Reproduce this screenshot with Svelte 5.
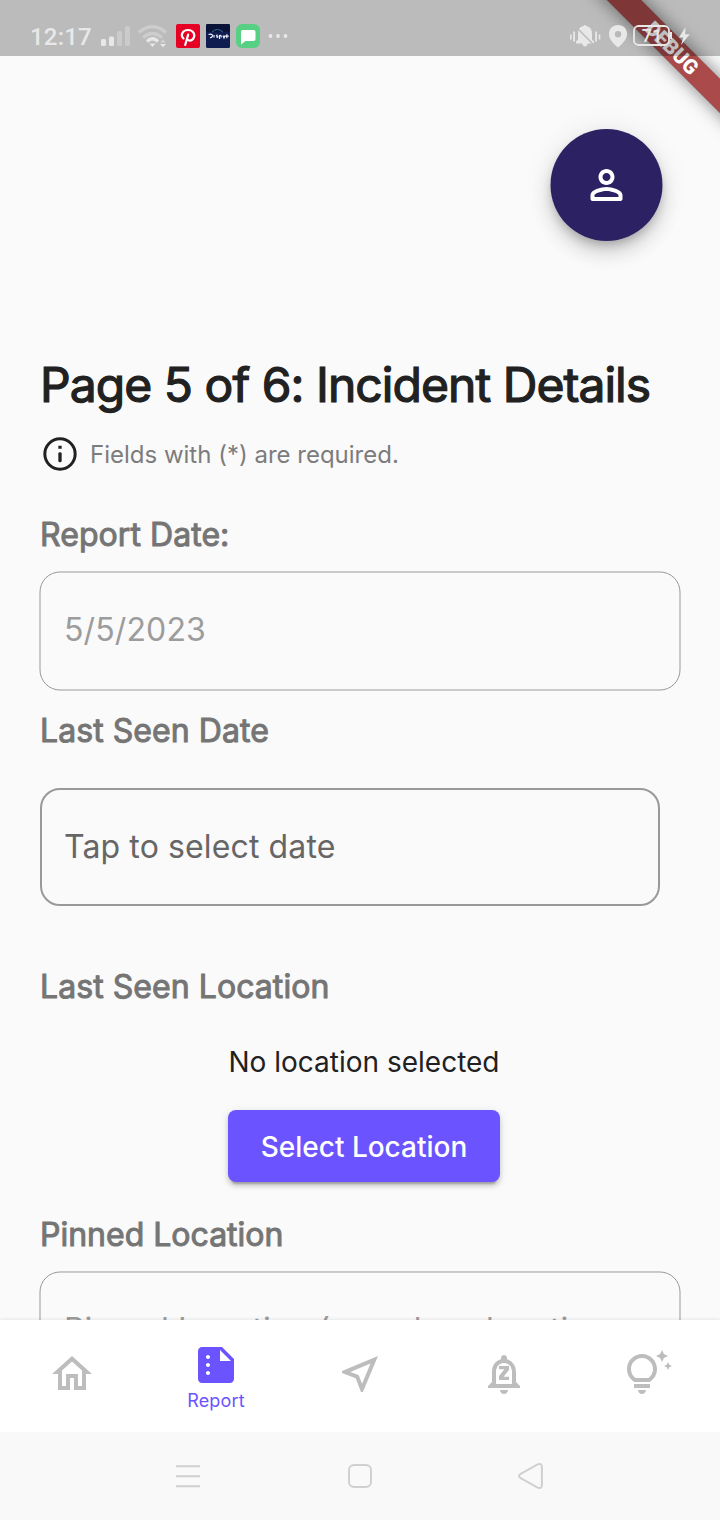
<script>
  const tabs = [
    { name: 'home', d: 'M12 5.69l5 4.5V18h-2v-6H9v6H7v-7.81l5-4.5M12 3L2 12h3v8h6v-6h2v6h6v-8h3L12 3z' },
    { name: 'report', label: 'Report', d: 'M15 3H5C3.9 3 3 3.9 3 5V19c0 1.1.9 2 2 2H19c1.1 0 2-.9 2-2V9L15 3zM8 17c-.55 0-1-.45-1-1s.45-1 1-1 1 .45 1 1-.45 1-1 1zM8 13c-.55 0-1-.45-1-1s.45-1 1-1 1 .45 1 1-.45 1-1 1zM8 9c-.55 0-1-.45-1-1s.45-1 1-1 1 .45 1 1-.45 1-1 1zM14 10V4.5l5.5 5.5H14z' },
    { name: 'nearby', d: 'M17.27 6.73l-4.24 10.13-1.32-3.42-.32-.83-.82-.32-3.43-1.33 10.13-4.23M21 3L3 10.53v.98l6.84 2.65L12.48 21h.98L21 3z' },
    { name: 'alerts', d: 'M18 16v-5c0-3.07-1.63-5.64-4.5-6.32V4c0-.83-.67-1.5-1.5-1.5s-1.5.67-1.5 1.5v.68C7.64 5.36 6 7.92 6 11v5l-2 2v1h16v-1l-2-2zm-2 1H8v-6c0-2.48 1.51-4.5 4-4.5s4 2.02 4 4.5v6zM12 22c1.1 0 2-.9 2-2h-4c0 1.1.9 2 2 2zM9.5 9.6h2.7l-2.7 3.4V15h5v-1.600h-2.700l2.700-3.400V8h-5v1.600z' },
    { name: 'tips', d: 'M7 20h4c0 1.1-.9 2-2 2s-2-.9-2-2zM5 19h8v-2H5v2zM16.5 9.5c0 3.82-2.66 5.86-3.77 6.5H5.27C4.16 15.36 1.5 13.32 1.5 9.5 1.5 5.36 4.86 2 9 2s7.5 3.36 7.5 7.5zM14.5 9.5C14.5 6.47 12.03 4 9 4S3.5 6.47 3.5 9.5c0 2.47 1.49 3.89 2.35 4.5h6.3c.86-.61 2.35-2.03 2.35-4.5zM21.37 7.37L20 8l1.37.63L22 10l.63-1.37L24 8l-1.37-.63L22 6l-.63 1.37zM19 6l.94-2.06L22 3l-2.06-.94L19 0l-.94 2.06L16 3l2.06.94L19 6z' },
  ];
</script>

<div class="phone">
  <main>
    <div class="top">
      <button class="avatar" aria-label="Profile">
        <svg width="48" height="48" viewBox="0 0 24 24"><path fill="#fff" fill-rule="evenodd" d="M12 6c1.1 0 2 .9 2 2s-.9 2-2 2-2-.9-2-2 .9-2 2-2m0 9c2.7 0 5.8 1.29 6 2v1H6v-.99c.2-.72 3.3-2.01 6-2.01M12 4C9.79 4 8 5.79 8 8s1.79 4 4 4 4-1.79 4-4-1.79-4-4-4zM12 13c-2.67 0-8 1.34-8 4v2c0 .55.45 1 1 1h14c.55 0 1-.45 1-1v-2c0-2.66-5.33-4-8-4z"/></svg>
      </button>
    </div>
    <h1>Page 5 of 6: Incident Details</h1>
    <div class="info">
      <svg width="40" height="40" viewBox="0 0 24 24"><circle cx="12" cy="12" r="9.1" fill="none" stroke="#212121" stroke-width="1.8"/><path fill="#212121" d="M11 7h2v1.800h-2zM11 11.600a1 .6 0 0 1 2 0V16a1 1 0 0 1-2 0z"/></svg>
      <span>Fields with (*) are required.</span>
    </div>
    <h2>Report Date:</h2>
    <div class="field thin">
      <svg class="outline" width="642" height="120"><rect x="1" y="1" width="640" height="118" rx="20"/></svg>
      <span>5/5/2023</span>
    </div>
    <h2 class="seen">Last Seen Date</h2>
    <div class="field picker"><span>Tap to select date</span></div>
    <h2 class="place">Last Seen Location</h2>
    <div class="location">
      <p>No location selected</p>
      <button class="select">Select Location</button>
    </div>
    <h2 class="pinned">Pinned Location</h2>
    <div class="field thin">
      <svg class="outline" width="642" height="120"><rect x="1" y="1" width="640" height="118" rx="20"/></svg>
      <span>Pinned Location (any place location...</span>
    </div>
  </main>

  <nav>
    {#each tabs as tab}
      <div class="tab" class:active={tab.label}>
        <svg width="48" height="48" viewBox="0 0 24 24"><path fill-rule="evenodd" d={tab.d}/></svg>
        {#if tab.label}<span>{tab.label}</span>{/if}
      </div>
    {/each}
  </nav>

  <footer>
    <svg width="28" height="28" viewBox="0 0 28 28"><path d="M2 4.3h24M2 14.3h24M2 24.3h24"/></svg>
    <svg width="28" height="28" viewBox="0 0 28 28"><rect x="3" y="3" width="22" height="22" rx="5"/></svg>
    <svg width="28" height="28" viewBox="0 0 28 28"><path d="M2.200 12.200L19.700 2.400Q23.500 1 23.900 4.500V23.500Q23.500 27 19.700 25.600L2.200 15.800Q-.2 14 2.200 12.200Z"/></svg>
  </footer>

  <div class="corner"><div class="ribbon">DEBUG</div></div>

  <header>
    <span class="time">12:17</span>
    <svg width="190" height="32" viewBox="100 20 190 32">
      <g fill="#e8e8e8">
        <rect x="101" y="39" width="5" height="7" rx="1.5"/><rect x="109" y="36.500" width="5" height="9.500" rx="1.5"/>
        <g fill="#cbcbcb"><rect x="117" y="31" width="5" height="15" rx="1.5"/><rect x="125" y="26" width="5" height="20" rx="1.500"/></g>
      </g>
      <g fill="none" stroke-width="3.200">
        <path stroke="#cdcdcd" d="M138.600 32.500Q152.500 21 166 32.500M143 37.500Q152.500 29.500 162 37.500"/>
        <path stroke="#e8e8e8" d="M147 41.500Q152.500 36 158 41.500"/>
      </g>
      <path fill="#e8e8e8" d="M149.500 43.500h6l-3 3.500zM160 44h6l-3 3.200z"/><path fill="#d2d2d2" d="M160 42.500h6l-3-3.200z"/>
      <rect x="176" y="24" width="24" height="24" rx="2" fill="#e60023"/>
      <g fill="none" stroke="#fff" stroke-width="2.200" stroke-linecap="round"><path d="M183.500 38.500C180 35 182.500 30 188 30s8 5 5 9c-2 2.500-5 1.600-6 0M188.200 34.500L185.200 45"/></g>
      <rect x="206" y="24" width="24" height="24" rx="1.500" fill="#0e1c50"/>
      <rect x="206" y="24" width="24" height="8" rx="1.500" fill="#0a1238"/>
      <path d="M212 32q5-5 11 0" fill="none" stroke="#2a6c9c"/>
      <path d="M208.500 34.500q4-1 4 1.300-.5 2-2.500 1.700M214 35v2.500M217.500 34.800q-2 1-.3 1.500 1.500.8-.7 1.200M219.500 39v-3.500q2.500-.5 1.500 2M223 35.500l1 2.500 1-2.500M226.800 34.200v4M224.800 36.200h4" fill="none" stroke="#eef" stroke-width="1.200"/>
      <rect x="236" y="24" width="24" height="24" rx="6" fill="#57d083"/>
      <path fill="#fff" d="M242.500 30h11q2 0 2 2v7q0 2-2 2H245.500L241 44.500V32q0-2 1.500-2z"/>
      <g fill="#e8e8e8"><circle cx="270.500" cy="36" r="1.900"/><circle cx="278" cy="36" r="1.900"/><circle cx="285.500" cy="36" r="1.900"/></g>
    </svg>
    <svg class="right" width="128" height="32" viewBox="566 20 128 32">
      <g fill="#e8e8e8">
        <path d="M576 41.500l2-2V34q0-7.500 5.500-8 1.500-1.800 3 0Q592 27 592 34v5.500l2 2v2H588q-1 3-3 3t-3-3H576z"/>
        <path d="M570 34.500h1.600v5H570zM573.200 31.500h1.800v10h-1.800zM595.200 31.500h1.800v10h-1.800zM598.700 34.500h1.600v5h-1.600z"/>
        <path stroke="#bbb" stroke-width="1.500" fill="none" d="M575.500 26.500l19 19"/>
        <path fill-rule="evenodd" d="M618 25c5.300 0 9 3.800 9 9 0 5.500-5 10-9 13.500-4-3.500-9-8-9-13.500 0-5.200 3.700-9 9-9zm0 6a3.200 3.200 0 1 0 0 6.400 3.200 3.200 0 0 0 0-6.400z"/>
        <path d="M685.500 27L679 37.500h4.300L681 45l8.800-10.800h-4.600z"/>
      </g>
      <rect x="634" y="26" width="35" height="19" rx="4.500" fill="none" stroke="#e8e8e8" stroke-width="1.800"/>
      <path d="M671 32v7" stroke="#e8e8e8" stroke-width="2"/>
      <text x="652" y="42" text-anchor="middle" fill="#e8e8e8">71</text>
    </svg>
  </header>
</div>

<style>
  :global(body) { margin: 0; }
  .phone {
    position: relative;
    display: flex;
    flex-direction: column;
    width: 720px;
    height: 1520px;
    overflow: hidden;
    background: #fafafa;
    color: #212121;
    font-family: Inter, sans-serif;
  }
  main { flex: 1; min-height: 0; overflow: hidden; padding: 129px 40px 0; box-sizing: border-box; }
  .top { display: flex; justify-content: flex-end; height: 227px; padding-right: 18px; }
  .avatar {
    display: grid; place-items: center; width: 112px; height: 112px; padding: 0; border: 0;
    border-radius: 50%; background: #2c2163; transform: translateX(.5px);
    box-shadow: 0 6px 10px -2px rgba(0,0,0,.2), 0 12px 20px rgba(0,0,0,.14), 0 2px 30px rgba(0,0,0,.08);
  }
  h1, h2, p { margin: 0; font-weight: 400; white-space: nowrap; }
  h1 { font-size: 48px; line-height: 58px; letter-spacing: -.95px; -webkit-text-stroke: 1.200px #212121; }
  .info { display: flex; align-items: center; gap: 10px; height: 40px; margin: 20px 0 41px; }
  .info span { font-size: 24px; line-height: 29px; color: #7c7c7c; }
  h2 { font-size: 32px; line-height: 39px; color: #757575; letter-spacing: .06px; margin-bottom: 18px; -webkit-text-stroke: 1px #757575; }
  .field {
    position: relative; display: flex; align-items: center; height: 118px; padding: 0 0 4px 24px;
    box-sizing: border-box; font-size: 32px; letter-spacing: .12px; white-space: nowrap;
  }
  .thin { color: #9c9c9c; }
  .outline { position: absolute; left: -1px; top: -1px; fill: none; stroke: #999; stroke-width: 1; }
  .seen { margin: 21px 0 38px; }
  .picker { width: 620px; padding: 0 0 2px 22px; border: 2px solid #999; border-radius: 20px; color: #666; }
  .place { margin: 61px 0 39px; }
  .location { display: flex; flex-direction: column; align-items: center; padding-left: 8px; }
  .location p { font-size: 28px; line-height: 34px; margin-bottom: 31px; }
  .select {
    width: 272px; height: 72px; padding: 2px 0 0; border: 0; border-radius: 8px; background: #6b54ff; color: #fff;
    font: 500 28px/34px Inter, sans-serif;
    box-shadow: 0 6px 2px -4px rgba(0,0,0,.2), 0 4px 4px rgba(0,0,0,.14), 0 2px 10px rgba(0,0,0,.12);
  }
  .pinned { margin-top: 33px; letter-spacing: 0; }

  nav { position: relative; display: grid; grid-template-columns: repeat(5, 1fr); height: 112px; background: #fff; box-shadow: 0 0 4px rgba(0,0,0,.12); }
  .tab { display: flex; flex-direction: column; align-items: center; padding-top: 30px; fill: #bdbdbd; }
  .tab svg { overflow: visible; }
  .active { padding-top: 21px; fill: #6b54ff; color: #6b54ff; }
  .tab span { margin-top: 1px; font-size: 18px; line-height: 22px; letter-spacing: .15px; }

  footer { position: relative; display: flex; justify-content: space-between; align-items: center; height: 88px; padding: 0 174px; box-sizing: border-box; background: #f9f9f9; fill: none; stroke: #d0d0d0; stroke-width: 2; }
  footer svg { overflow: visible; }

  .corner { position: absolute; top: 0; right: 0; width: 160px; height: 160px; overflow: hidden; }
  .ribbon {
    position: absolute; left: 12px; top: 36px; width: 200px; height: 24px; transform: rotate(45deg);
    background: linear-gradient(rgba(183,28,28,.627), rgba(183,28,28,.627)), rgba(0,0,0,.4);
    box-shadow: 0 0 18px rgba(0,0,0,.5); color: #fff; text-align: center;
    font: 900 20.400px/24px Roboto, sans-serif;
  }
  header {
    position: absolute; inset: 0 0 auto; display: flex; align-items: center; height: 56px;
    padding: 18px 26px 2px 30px; box-sizing: border-box; background: rgba(0,0,0,.25);
  }
  .time { width: 70px; padding-top: 2px; font: 500 24px/32px Roboto, sans-serif; letter-spacing: .2px; color: #e8e8e8; }
  .right { margin-left: auto; font: 500 18px Roboto, sans-serif; }
</style>
